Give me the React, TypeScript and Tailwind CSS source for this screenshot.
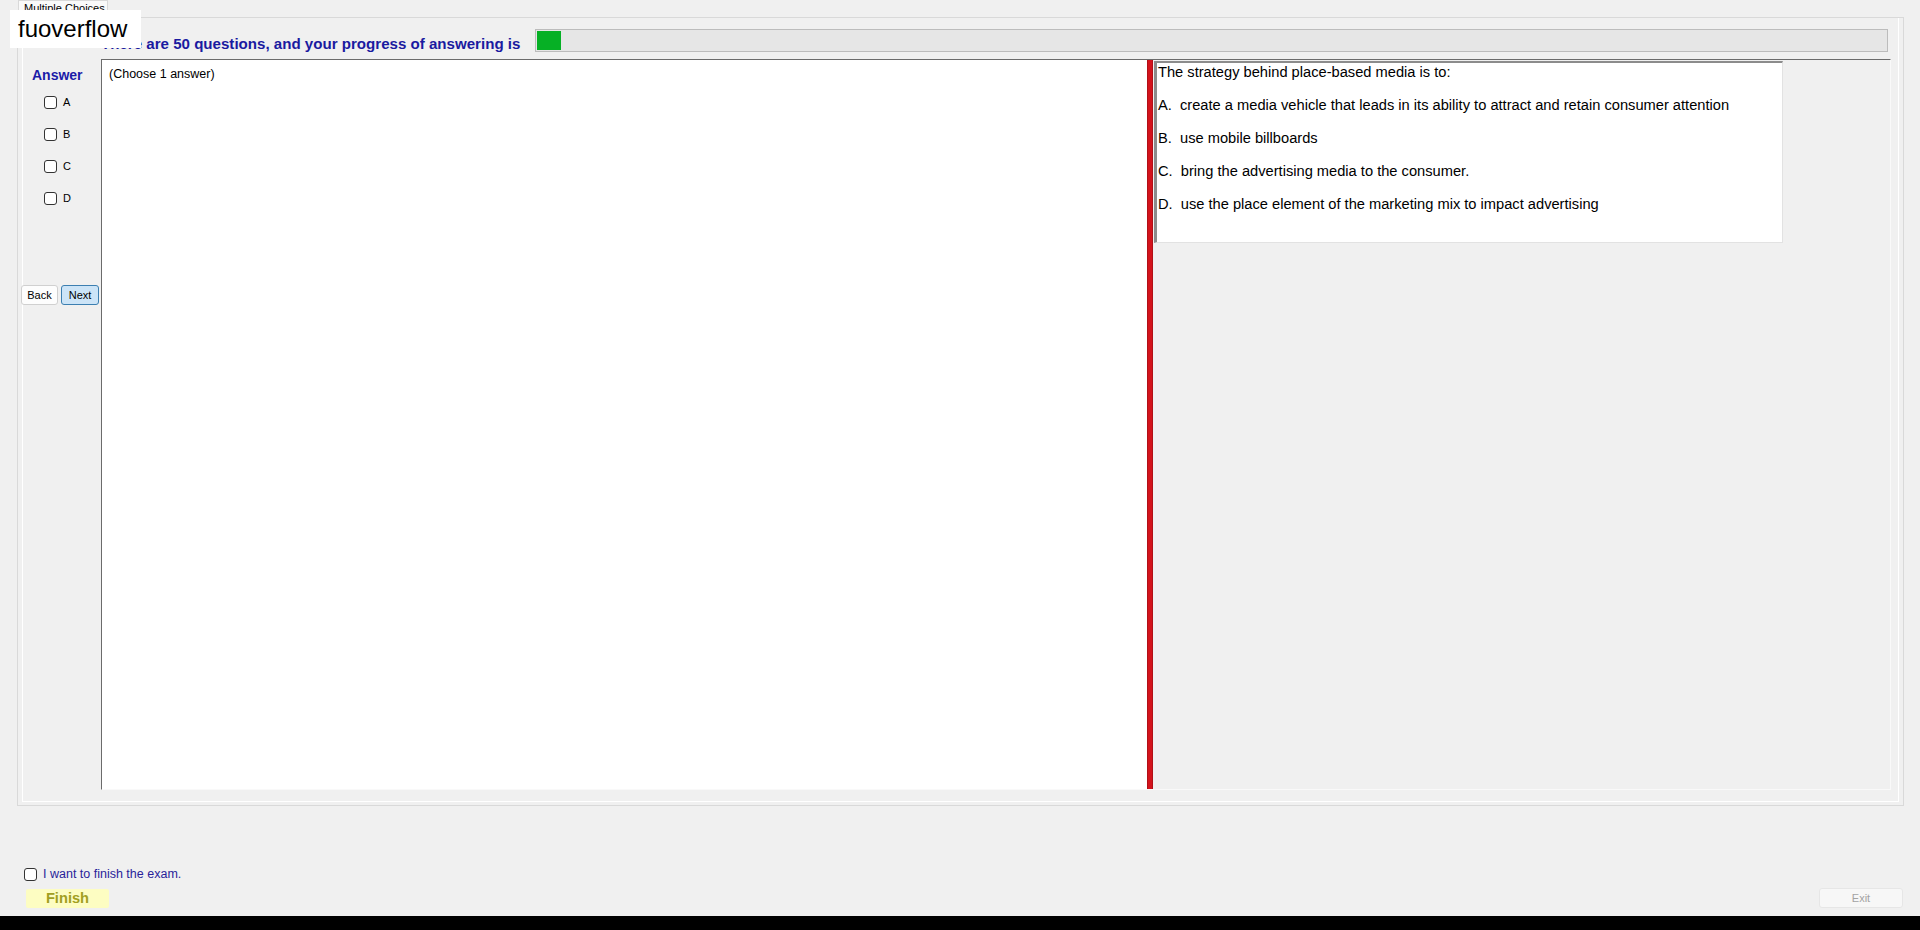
import { useState } from 'react'

const options = [
  'create a media vehicle that leads in its ability to attract and retain consumer attention',
  'use mobile billboards',
  'bring the advertising media to the consumer.',
  'use the place element of the marketing mix to impact advertising'
]

function Box({ checked, onClick }: { checked: boolean; onClick: () => void }) {
  return (
    <button
      onClick={onClick}
      className="h-[13px] w-[13px] shrink-0 rounded-[3px] border border-[#333] bg-white flex items-center justify-center"
    >
      {checked && <span className="block h-[7px] w-[7px] rounded-[1px] bg-[#005fb8]" />}
    </button>
  )
}

export default function App() {
  const [picked, setPicked] = useState<string[]>([])
  const [finish, setFinish] = useState(false)

  const toggle = (k: string) =>
    setPicked((p) => (p.includes(k) ? p.filter((x) => x !== k) : [...p, k]))

  return (
    <div className="relative w-[1920px] h-[930px] bg-[#f0f0f0] flex flex-col font-['Liberation_Sans',Arial,sans-serif] text-black overflow-hidden">
      {/* tab strip */}
      <div className="h-[17px] pl-[18px] flex">
        <div className="w-[90px] h-[17px] bg-[#fafafa] border border-b-0 border-[#d9d9d9] text-[11px] leading-[15px] pl-[5px]">
          Multiple Choices
        </div>
      </div>

      {/* tab page */}
      <div className="ml-[17px] w-[1887px] h-[789px] border border-[#d9d9d9] pl-[4px] pr-[4px] pb-[3px]">
        <div className="h-full border-l border-r border-b border-white flex">
          {/* answer column */}
          <div className="w-[78px] shrink-0 flex flex-col">
            <div className="pt-[49px] pl-[9px] text-[14px] leading-[16px] font-bold text-[#1b1ba8]">Answer</div>
            <div className="mt-[3px] flex flex-col pl-[21px]">
              {['A', 'B', 'C', 'D'].map((k) => (
                <div key={k} className="h-[32px] flex items-center gap-[6px]">
                  <Box checked={picked.includes(k)} onClick={() => toggle(k)} />
                  <span className="text-[11px] leading-[13px]">{k}</span>
                </div>
              ))}
            </div>
            <div className="mt-[71px] flex gap-[3px] -ml-[2px]">
              <button className="w-[37px] h-[20px] bg-[#fdfdfd] border border-[#d0d0d0] rounded-[3px] text-[11px]">
                Back
              </button>
              <button className="w-[38px] h-[20px] bg-[#cce4f7] border border-[#3c7fb1] rounded-[3px] text-[11px]">
                Next
              </button>
            </div>
          </div>

          {/* main column */}
          <div className="w-[1790px] shrink-0 flex flex-col">
            <div className="h-[41px] flex items-start">
              <div className="shrink-0 mt-[17px] text-[15.1px] leading-[18px] font-bold text-[#1a1aa0] whitespace-nowrap">
                There are 50 questions, and your progress of answering is
              </div>
              <div className="shrink-0 ml-[15px] mt-[11px] w-[1353px] h-[23px] bg-[#e6e6e6] border border-[#bcbcbc] p-[1px]">
                <div className="w-[24px] h-full bg-[#06b025]" />
              </div>
            </div>

            <div className="h-[731px] border-t border-l border-[#6b6b6b] border-r border-b border-r-[#f9f9f9] border-b-[#f9f9f9] flex">
              <div className="w-[1045px] shrink-0 bg-white pl-[7px] pt-[7px] text-[12.5px] leading-[14px]">
                (Choose 1 answer)
              </div>
              <div className="w-[6px] shrink-0 bg-[#d3131c] border-x border-[#b10f17]" />
              <div className="flex-1 pl-[1px] pt-[1px]">
                <div className="w-[629px] h-[182px] bg-white border-l-[3px] border-t-[2px] border-[#8c8c8c] border-r border-b border-r-[#e2e2e2] border-b-[#e2e2e2] pl-[1px] pt-[1px] flex flex-col gap-[16px] text-[14.67px] leading-[17px]">
                  <div>The strategy behind place-based media is to:</div>
                  {options.map((o, i) => (
                    <div key={i} className="whitespace-pre">
                      {String.fromCharCode(65 + i) + '.  ' + o}
                    </div>
                  ))}
                </div>
              </div>
            </div>
          </div>
        </div>
      </div>

      {/* bottom */}
      <div className="flex-1 flex flex-col">
        <div className="mt-[59px] pl-[24px] h-[18px] flex items-center gap-[6px]">
          <Box checked={finish} onClick={() => setFinish(!finish)} />
          <span className="text-[12.5px] leading-[14px] text-[#2a1f9a]">I want to finish the exam.</span>
        </div>
        <div className="mt-[6px] pl-[26px] pr-[17px] flex justify-between items-start">
          <button className="w-[83px] h-[19px] bg-[#fdfdc2] rounded-[2px] text-[14.67px] leading-[19px] font-bold text-[#a19f22]">
            Finish
          </button>
          <button className="w-[84px] h-[20px] -mt-[1px] bg-[#f7f7f7] border border-[#e6e6e6] rounded-[3px] text-[11px] text-[#a3a3a3]">
            Exit
          </button>
        </div>
      </div>
      <div className="h-[14px] bg-black" />

      {/* watermark */}
      <div className="absolute left-[10px] top-[10px] w-[131px] h-[38px] bg-white pl-[8px] text-[24px] leading-[38px]">
        fuoverflow
      </div>
    </div>
  )
}
